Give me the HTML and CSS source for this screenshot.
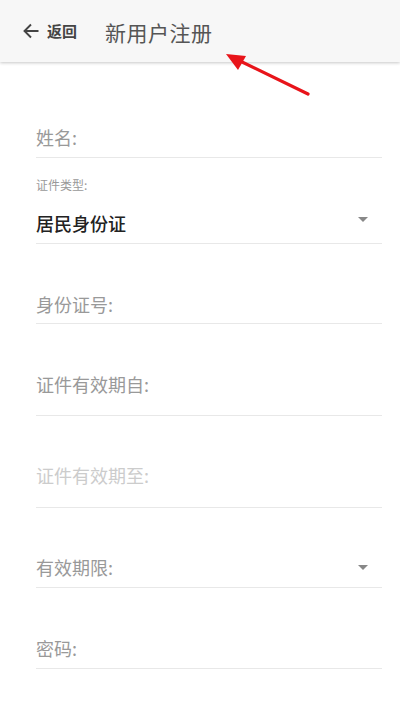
FILE: index.html
```html
<!DOCTYPE html>
<html lang="zh">
<head>
<meta charset="utf-8">
<title>新用户注册</title>
<link rel="stylesheet" href="styles.css">
</head>
<body>
<div class="page">
  <header class="topbar">
    <div class="back">
      <svg class="back-icon" width="16" height="16" viewBox="0 0 16 16"><path d="M15.5 8H1.5M8 1.5L1.5 8 8 14.5" fill="none" stroke="#444" stroke-width="1.9"/></svg>
      <span class="back-text">返回</span>
    </div>
    <h1 class="title">新用户注册</h1>
  </header>
  <svg class="pointer" width="400" height="120" viewBox="0 0 400 120">
    <line x1="308" y1="94" x2="238" y2="60" stroke="#e8141a" stroke-width="3.2" stroke-linecap="round"/>
    <polygon points="226,54 246,56 238,70" fill="#e8141a"/>
  </svg>
  <main class="form">
    <div class="field f-name"><span class="ph">姓名:</span></div>
    <div class="field f-type">
      <div class="small-label">证件类型:</div>
      <div class="select-row"><span class="value">居民身份证</span><span class="caret"></span></div>
    </div>
    <div class="field f-id"><span class="ph">身份证号:</span></div>
    <div class="field f-from"><span class="ph">证件有效期自:</span></div>
    <div class="field f-to"><span class="ph light">证件有效期至:</span></div>
    <div class="field f-term"><div class="select-row"><span class="ph">有效期限:</span><span class="caret"></span></div></div>
    <div class="field f-pwd"><span class="ph">密码:</span></div>
  </main>
</div>
</body>
</html>
```

FILE: styles.css
```css
* { box-sizing: border-box; }
html, body { margin: 0; padding: 0; background: #fff; }
body { font-family: "Noto Sans CJK SC", "Noto Sans", sans-serif; width: 400px; height: 710px; overflow: hidden; }
.page { position: relative; width: 400px; height: 710px; }
.topbar {
  height: 62px;
  background: #f7f7f7;
  box-shadow: 0 1px 3px rgba(0,0,0,0.22);
  display: flex;
  align-items: center;
  padding-left: 23px;
  position: relative;
  z-index: 1;
}
.back { display: flex; align-items: center; gap: 8px; width: 82px; }
.back-icon { display: block; margin-top: 0; }
.back-text { font-size: 15px; font-weight: 700; color: #444; line-height: 20px; }
.title { margin: 0; font-size: 21px; font-weight: 400; color: #555; line-height: 28px; letter-spacing: 0.5px; margin-top: 2px; }
.pointer { position: absolute; left: 0; top: 0; z-index: 2; pointer-events: none; }
.form { padding: 0 18px 0 36px; }
.field { border-bottom: 1px solid #e8e8e8; }
.ph { font-size: 18px; line-height: 24px; color: #999; display: block; }
.ph.light { color: #ccc; }
.small-label { font-size: 12px; line-height: 16px; color: #999; }
.value { font-size: 18px; line-height: 24px; color: #222; font-weight: 500; }
.select-row { display: flex; justify-content: space-between; align-items: center; }
.caret { width: 0; height: 0; border-left: 5px solid transparent; border-right: 5px solid transparent; border-top: 5px solid #888; margin-right: 14px; }
.f-name { margin-top: 63px; padding-bottom: 8px; }
.f-type { padding-top: 19px; padding-bottom: 8px; }
.f-type .select-row { margin-top: 18px; }
.f-type .caret { margin-top: -8px; }
.f-id { padding-top: 48px; padding-bottom: 7px; }
.f-from { padding-top: 48px; padding-bottom: 19px; }
.f-to { padding-top: 47px; padding-bottom: 20px; }
.f-term { padding-top: 47px; padding-bottom: 8px; }
.f-pwd { padding-top: 48px; padding-bottom: 8px; }
```
